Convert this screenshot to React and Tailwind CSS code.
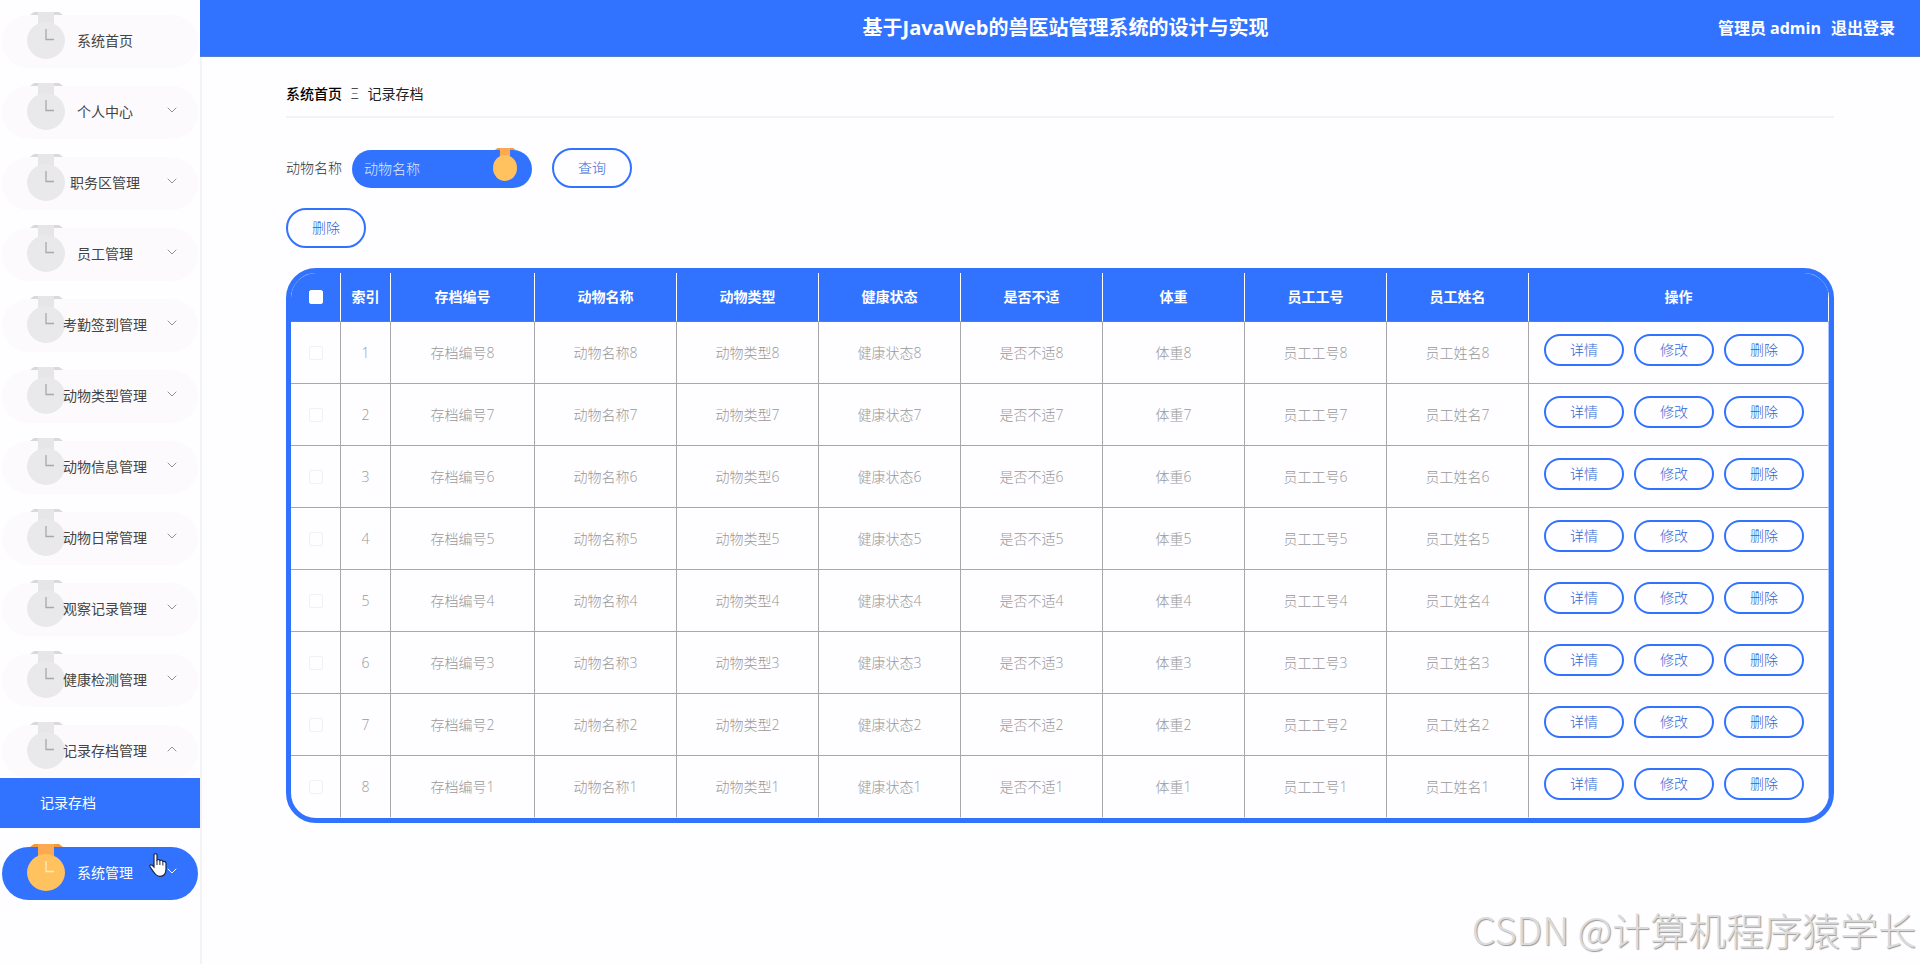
import { useState } from "react";
import clsx from "clsx";
import { ChevronDown, ChevronUp } from "lucide-react";

const menus = [
  { name: "系统首页" },
  { name: "个人中心", children: ["个人信息", "修改密码"] },
  { name: "职务区管理", children: ["职务区"] },
  { name: "员工管理", children: ["员工"] },
  { name: "考勤签到管理", children: ["考勤签到"] },
  { name: "动物类型管理", children: ["动物类型"] },
  { name: "动物信息管理", children: ["动物信息"] },
  { name: "动物日常管理", children: ["动物日常"] },
  { name: "观察记录管理", children: ["观察记录"] },
  { name: "健康检测管理", children: ["健康检测"] },
  { name: "记录存档管理", children: ["记录存档"] },
  { name: "系统管理", children: ["轮播图管理"] },
];

const columns = ["存档编号", "动物名称", "动物类型", "健康状态", "是否不适", "体重", "员工工号", "员工姓名"];
const rows = [8, 7, 6, 5, 4, 3, 2, 1];

const Medal = ({ active, hands = true, className }) => (
  <svg viewBox="0 0 38 47" preserveAspectRatio="none" className={className} aria-hidden="true">
    <path d="M3 3 L7 0 H32 L36 3 Z" fill={active ? "#f39a3c" : "#d9d8da"} />
    <rect x="11" y="0" width="16" height="14" fill={active ? "#fcaa51" : "#e6e5e7"} />
    <ellipse cx="19" cy="28.5" rx="19" ry="18.5" fill={active ? "#ffc25e" : "#e9e8ea"} />
    {hands ? (
      <path d="M19 17 V27.5 H27" fill="none" stroke={active ? "#ffe9c4" : "#a9a8aa"} strokeWidth="1.3" />
    ) : null}
  </svg>
);

const Sidebar = () => {
  const [open, setOpen] = useState("记录存档管理");
  const active = "系统管理";

  return (
    <aside className="w-[202px] shrink-0 border-r-2 border-[#f3f2f4] pt-[15px]">
      <ul>
        {menus.map((m) => {
          const isOpen = open === m.name;
          const isActive = active === m.name;
          const Arrow = isOpen ? ChevronUp : ChevronDown;
          return (
            <li key={m.name} className={isOpen ? "mb-[19px]" : "mb-[18px]"}>
              <div className="px-[2px]">
                <button
                  onClick={() => setOpen(isOpen ? "" : m.name)}
                  className={clsx(
                    "grid h-[53px] w-full grid-cols-1 grid-rows-1 items-center rounded-full text-sm",
                    isActive ? "bg-[#3173ff] text-white" : "bg-[#fcfafc] text-[#444]"
                  )}
                >
                  <Medal
                    active={isActive}
                    className="col-start-1 row-start-1 -mt-3 ml-[25px] h-[47px] w-[38px]"
                  />
                  <span className="col-start-1 row-start-1 pb-[2px] pl-[10px] text-center">{m.name}</span>
                  {m.children ? (
                    <Arrow
                      size={16}
                      strokeWidth={1.5}
                      className={clsx(
                        "col-start-1 row-start-1 mr-[18px] mb-[6px] justify-self-end",
                        isActive ? "text-white" : "text-[#909399]"
                      )}
                    />
                  ) : null}
                </button>
              </div>
              {isOpen && m.children ? (
                <ul>
                  {m.children.map((c) => (
                    <li key={c}>
                      <a href="#" className="block h-[50px] bg-[#3173ff] pl-10 text-sm leading-[50px] text-white">
                        {c}
                      </a>
                    </li>
                  ))}
                </ul>
              ) : null}
            </li>
          );
        })}
      </ul>
    </aside>
  );
};

const Navbar = () => (
  <header className="grid h-[57px] grid-cols-[1fr_auto_1fr] items-center border-b border-[#5580c8] bg-[#3173ff] pr-[25px] pl-9 font-bold text-white">
    <h1 className="col-start-2 text-xl">基于JavaWeb的兽医站管理系统的设计与实现</h1>
    <div className="flex justify-end gap-[10px] text-base">
      <span>管理员 admin</span>
      <button>退出登录</button>
    </div>
  </header>
);

const OutlineButton = ({ children, className }) => (
  <button
    className={clsx(
      "w-20 shrink-0 rounded-full border-2 border-[#3173ff] text-sm font-light text-[#2f66d8]",
      className
    )}
  >
    {children}
  </button>
);

const checkbox =
  "block mx-auto size-[14px] appearance-none rounded-[2px] border bg-[#fefdff] checked:bg-[#7fa8ff]";

const RecordTable = () => {
  const [selected, setSelected] = useState([]);

  const toggle = (n) => {
    setSelected(selected.includes(n) ? selected.filter((s) => s !== n) : [...selected, n]);
  };

  return (
    <div className="mt-5 overflow-hidden rounded-[30px] border-[5px] border-[#3173ff]">
      <table className="w-full table-fixed border-separate border-spacing-0 text-center text-sm">
        <colgroup>
          <col className="w-[50px]" />
          <col className="w-[50px]" />
          {columns.map((c, i) => (
            <col key={c} className={i === 0 ? "w-[144px]" : ""} />
          ))}
          <col className="w-[300px]" />
        </colgroup>
        <thead>
          <tr className="h-[49px] bg-[#3173ff] font-bold text-white">
            <th className="border-r border-b border-r-white border-b-[#5580c8]">
              <input
                type="checkbox"
                aria-label="全选"
                className={clsx(checkbox, "border-white")}
                checked={selected.length === rows.length}
                onChange={(e) => setSelected(e.target.checked ? rows : [])}
              />
            </th>
            {["索引", ...columns, "操作"].map((c) => (
              <th key={c} className="border-r border-b border-r-white border-b-[#5580c8]">
                {c}
              </th>
            ))}
          </tr>
        </thead>
        <tbody className="font-light text-[#999] [&_td]:border-r [&_td]:border-b [&_td]:border-[#a8a7a9] [&_td:last-child]:border-r-[#a9c4ff] [&_tr:last-child_td]:border-b-transparent">
          {rows.map((n, i) => (
            <tr key={n} className="h-[62px]">
              <td>
                <input
                  type="checkbox"
                  aria-label={`选择第${i + 1}行`}
                  className={clsx(checkbox, "border-[#f2f0f5]")}
                  checked={selected.includes(n)}
                  onChange={() => toggle(n)}
                />
              </td>
              <td>{i + 1}</td>
              {columns.map((c) => (
                <td key={c}>{c + n}</td>
              ))}
              <td className="pt-3 pl-[15px] align-top">
                <div className="flex gap-[10px]">
                  <OutlineButton className="h-8">详情</OutlineButton>
                  <OutlineButton className="h-8">修改</OutlineButton>
                  <OutlineButton className="h-8">删除</OutlineButton>
                </div>
              </td>
            </tr>
          ))}
        </tbody>
      </table>
    </div>
  );
};

const App = () => {
  return (
    <div className="relative flex min-h-screen bg-[#fefdff] font-['Open_Sans','Noto_Sans_CJK_SC',sans-serif]">
      <Sidebar />

      {/* header covers the sidebar border */}
      <div className="-ml-[2px] min-w-0 flex-1">
        <Navbar />

        <main className="px-[5%]">
          <nav className="flex gap-[9px] border-b-2 border-[#f2f1f3] pt-[27px] pb-3 text-sm text-[#222]">
            <a href="#" className="font-medium text-black">系统首页</a>
            <span className="font-light">Ξ</span>
            <span>记录存档</span>
          </nav>

          <form className="flex items-center pt-[30px]" onSubmit={(e) => e.preventDefault()}>
            <label htmlFor="animal" className="mr-[10px] text-sm font-light text-[#333]">动物名称</label>
            <div className="relative mr-5 self-end">
              <input
                id="animal"
                placeholder="动物名称"
                className="block h-[38px] w-[180px] rounded-full bg-[#3173ff] pr-10 pb-[2px] pl-3 text-sm font-light text-white outline-none placeholder:text-[#dfe8ff]"
              />
              <Medal active hands={false} className="absolute -top-[2px] right-[15px] h-[33px] w-6" />
            </div>
            <OutlineButton className="h-10">查询</OutlineButton>
          </form>

          <div className="mt-5 flex">
            <OutlineButton className="h-10">删除</OutlineButton>
          </div>

          <RecordTable />
        </main>
      </div>

      {/* hand pointer */}
      <svg viewBox="0 0 18 24" className="pointer-events-none absolute top-[853px] left-[149px] h-6 w-[18px]" aria-hidden="true">
        <path
          d="M5 1.8 C5 .2 8 .2 8 1.8 V7 C9 6.200 10.6 6.400 10.800 7.500 C12 6.800 13.600 7.300 13.800 8.500 C15.400 7.900 17 8.800 17 10.300 V16 C17 21 14.500 23.300 11 23.300 C7.500 23.300 6.200 21.500 4.500 18.800 L1 13.800 C.2 12.300 2 11.200 3.300 12.300 L5 14 Z"
          fill="#fff"
          stroke="#1c2440"
          strokeWidth="1.2"
        />
        <path d="M8 7 V12 M10.900 7.800 V12 M13.900 8.800 V12.500" stroke="#1c2440" strokeWidth="1" />
      </svg>

      <div className="pointer-events-none absolute right-1 bottom-[10px] font-['Noto_Sans_CJK_SC',sans-serif] text-[38px] leading-[50px] font-light text-[#dcdcdd] [text-shadow:1px_1px_1px_#999]">
        CSDN @计算机程序猿学长
      </div>
    </div>
  );
};

export default App;
